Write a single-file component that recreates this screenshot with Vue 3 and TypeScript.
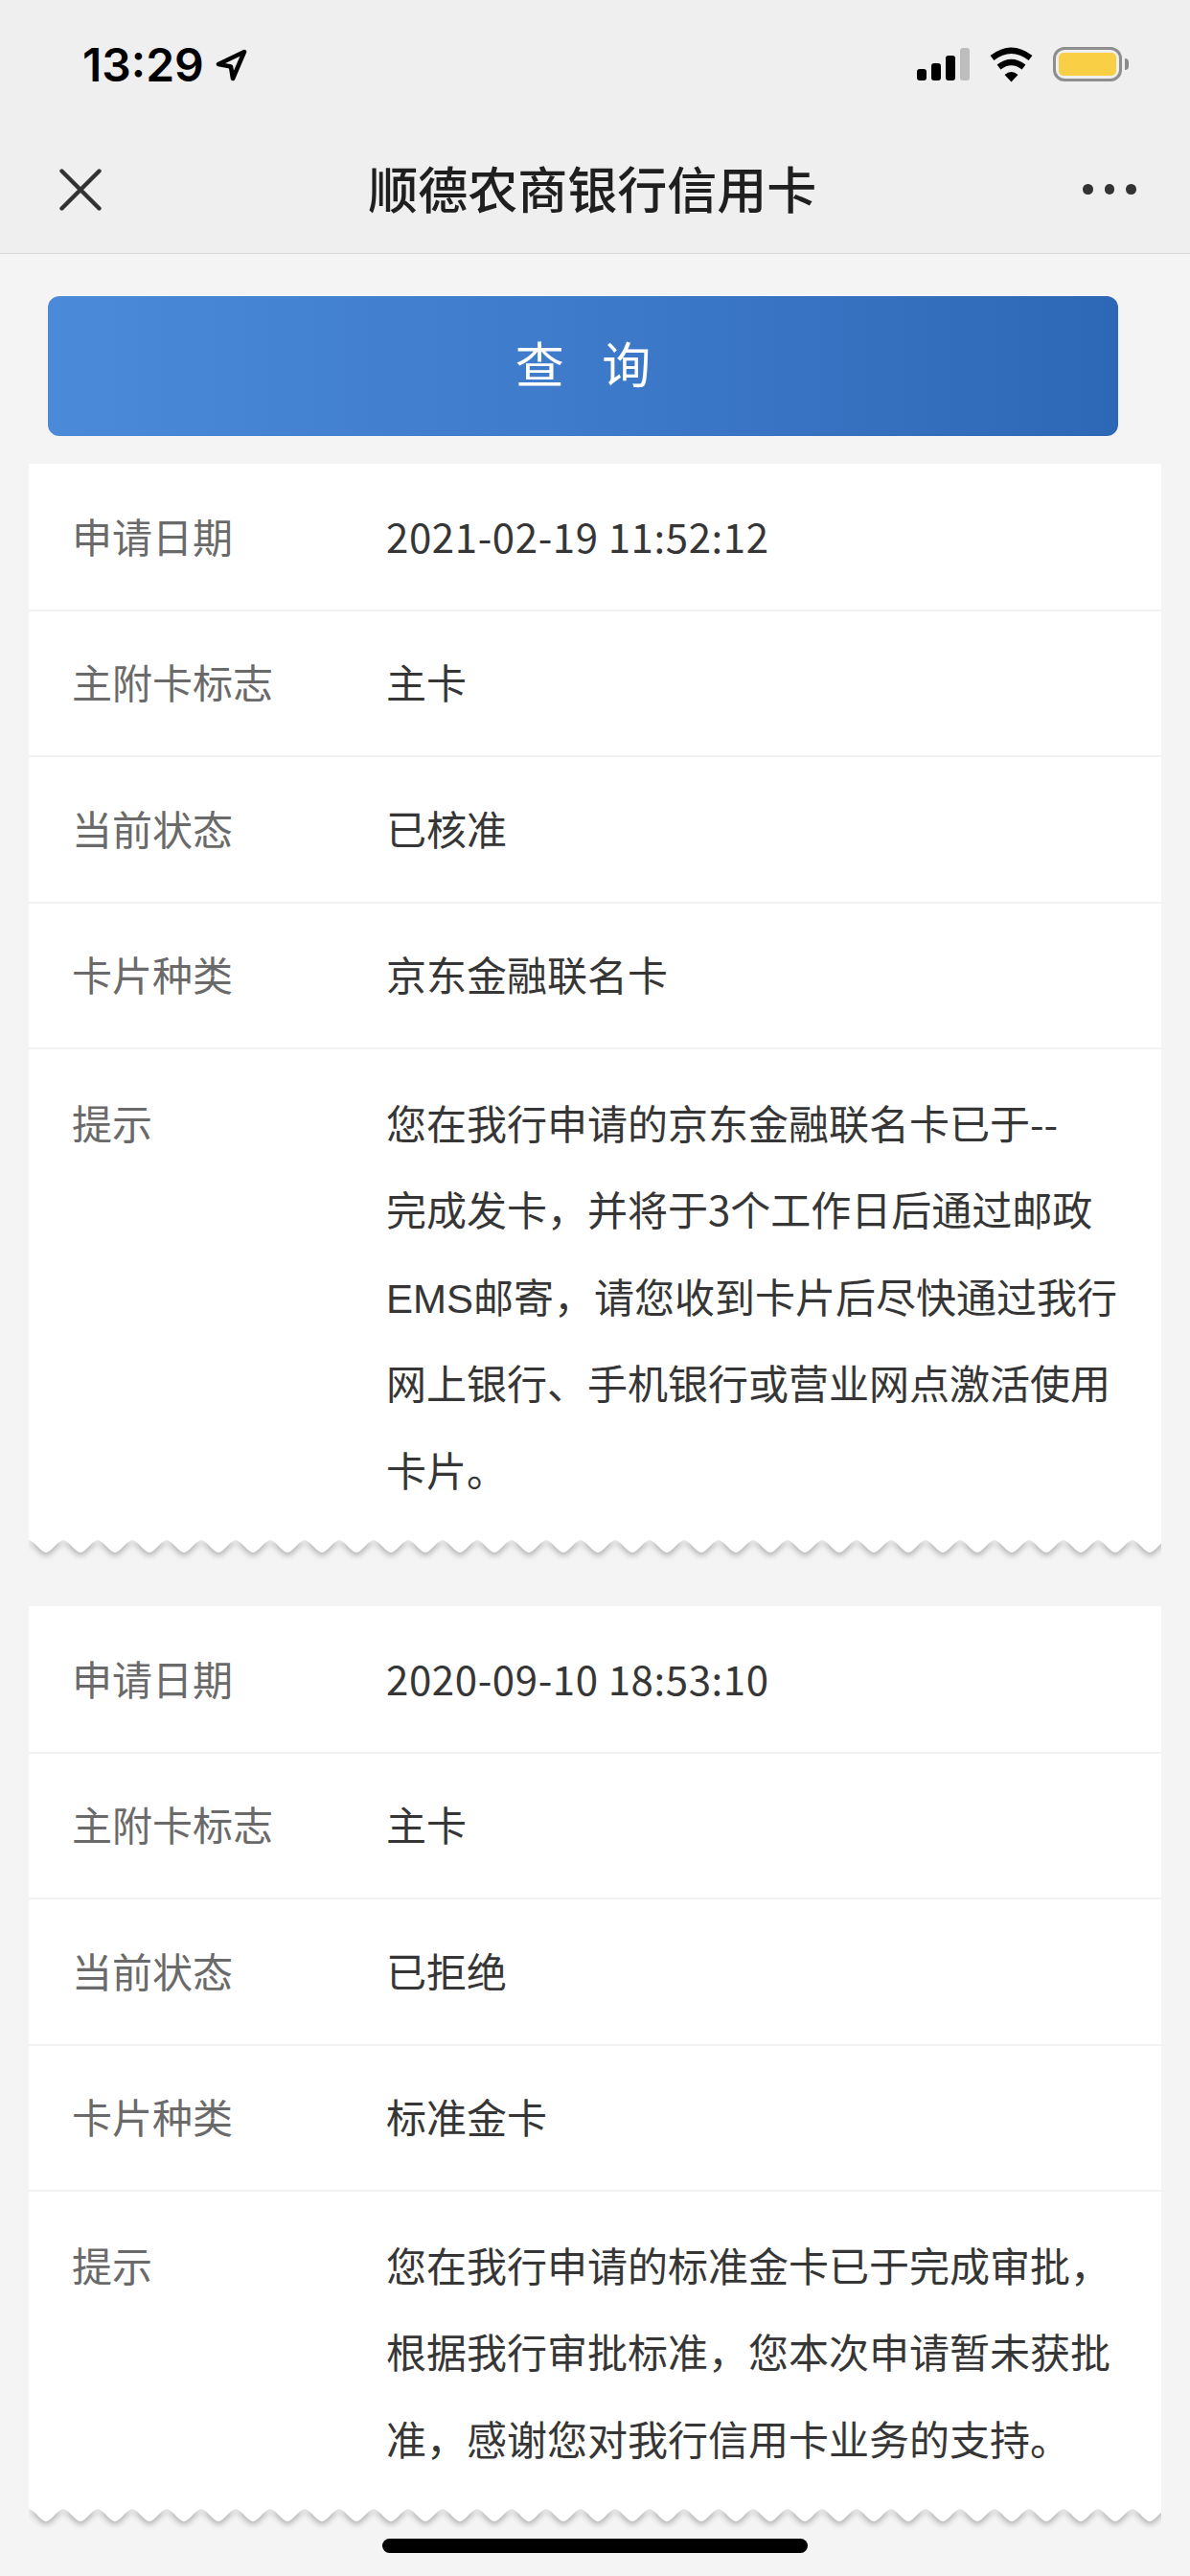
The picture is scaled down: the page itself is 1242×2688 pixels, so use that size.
<script setup lang="ts">
interface Row { label: string; lines: string[] }

const cards: Row[][] = [
  [
    { label: '申请日期', lines: ['2021-02-19 11:52:12'] },
    { label: '主附卡标志', lines: ['主卡'] },
    { label: '当前状态', lines: ['已核准'] },
    { label: '卡片种类', lines: ['京东金融联名卡'] },
    {
      label: '提示',
      lines: [
        '您在我行申请的京东金融联名卡已于--',
        '完成发卡，并将于3个工作日后通过邮政',
        'EMS邮寄，请您收到卡片后尽快通过我行',
        '网上银行、手机银行或营业网点激活使用',
        '卡片。',
      ],
    },
  ],
  [
    { label: '申请日期', lines: ['2020-09-10 18:53:10'] },
    { label: '主附卡标志', lines: ['主卡'] },
    { label: '当前状态', lines: ['已拒绝'] },
    { label: '卡片种类', lines: ['标准金卡'] },
    {
      label: '提示',
      lines: [
        '您在我行申请的标准金卡已于完成审批，',
        '根据我行审批标准，您本次申请暂未获批',
        '准，感谢您对我行信用卡业务的支持。',
      ],
    },
  ],
]

const WIDTH = 1182
const PERIOD = 36
const TOP = 1
const BOTTOM = 14

function buildWave(): string {
  let d = `M0 0 L0 ${TOP}`
  for (let x = 0; x < WIDTH; x += PERIOD) {
    const half = PERIOD / 2
    d += ` C${x + 5} ${TOP} ${x + half - 5} ${BOTTOM} ${x + half} ${BOTTOM}`
    d += ` C${x + half + 5} ${BOTTOM} ${x + PERIOD - 5} ${TOP} ${x + PERIOD} ${TOP}`
  }
  return `${d} L${WIDTH + PERIOD} 0 Z`
}

const wavePath = buildWave()

const isDate = (line: string): boolean => /^[\d\s:-]+$/.test(line)
const segments = (line: string): string[] => line.split(/([A-Z]+)/).filter(Boolean)
const isLatin = (part: string): boolean => /^[A-Z]+$/.test(part)
</script>

<template>
  <div class="page">
    <header class="header">
      <div class="status">
        <div class="clock">
          <span class="time">13:29</span>
          <svg class="arrow" width="34" height="34" viewBox="0 0 34 34">
            <path d="M30 3 L3 16 L16 18.5 L18 31 Z" fill="none" stroke="#000" stroke-width="4.6" stroke-linejoin="round" />
          </svg>
        </div>
        <div class="indicators">
          <div class="signal">
            <i class="bar b1"></i>
            <i class="bar b2"></i>
            <i class="bar b3"></i>
            <i class="bar b4"></i>
          </div>
          <svg class="wifi" width="48" height="37" viewBox="0 0 48 37">
            <path d="M3.5 11.5 Q23.5 -4 43.5 11.5" fill="none" stroke="#000" stroke-width="6.4" />
            <path d="M10.5 21 Q23.5 11 36.5 21" fill="none" stroke="#000" stroke-width="6.2" />
            <path d="M16.5 29 Q23.5 23 30.5 29 L23.5 36.5 Z" fill="#000" />
          </svg>
          <div class="battery">
            <div class="cell"><div class="charge"></div></div>
            <div class="nub"></div>
          </div>
        </div>
      </div>
      <nav class="nav">
        <svg class="close" width="44" height="44" viewBox="0 0 44 44">
          <path d="M2.5 2.5 L41.5 41.5 M41.5 2.5 L2.5 41.5" stroke="#333" stroke-width="4.4" stroke-linecap="round" />
        </svg>
        <h1 class="title">顺德农商银行信用卡</h1>
        <div class="more"><i></i><i></i><i></i></div>
      </nav>
    </header>

    <main class="content">
      <button class="query" type="button">查 询</button>
      <section v-for="(card, c) in cards" :key="c" class="card">
        <div class="rows">
          <div v-for="row in card" :key="row.label" class="row">
            <div class="label">{{ row.label }}</div>
            <div class="value">
              <div v-for="line in row.lines" :key="line" class="line" :class="{ date: isDate(line) }">
                <span v-for="part in segments(line)" :key="part" :class="{ latin: isLatin(part) }">{{ part }}</span>
              </div>
            </div>
          </div>
        </div>
        <svg class="wave" :width="WIDTH" height="24" :viewBox="`0 0 ${WIDTH} 24`">
          <path :d="wavePath" fill="#fff" />
        </svg>
      </section>
    </main>

    <div class="home"></div>
  </div>
</template>

<style scoped>
.page {
  position: relative;
  width: 1242px;
  height: 2688px;
  overflow: hidden;
  background: #f4f4f4;
  font-family: "Noto Sans CJK SC", "Liberation Sans", sans-serif;
}

.header {
  height: 265px;
  box-sizing: border-box;
  background: #efefef;
  border-bottom: 1px solid #d8d8d8;
}

.status {
  height: 135px;
  box-sizing: border-box;
  padding: 49px 64px 0 86px;
  display: flex;
  justify-content: space-between;
  align-items: flex-start;
}

.clock {
  display: flex;
  align-items: center;
  height: 37px;
  gap: 12px;
}

.time {
  font-family: Inter, "Liberation Sans", sans-serif;
  font-weight: 600;
  font-size: 48px;
  line-height: 37px;
  color: #000;
}

.arrow {
  margin-top: 1px;
}

.indicators {
  display: flex;
  align-items: flex-start;
}

.signal {
  display: flex;
  align-items: flex-end;
  gap: 5px;
  height: 35px;
  margin-right: 20px;
}

.bar {
  display: block;
  width: 10px;
  border-radius: 3px;
  background: #000;
}

.b1 { height: 12px; }
.b2 { height: 18px; }
.b3 { height: 26px; }
.b4 { height: 34px; background: #bdbdbd; }

.wifi {
  margin-right: 19px;
}

.battery {
  display: flex;
  align-items: center;
  height: 36px;
}

.cell {
  box-sizing: border-box;
  width: 72px;
  height: 36px;
  padding: 3px;
  border: 3px solid #8e8e8e;
  border-radius: 12px;
}

.charge {
  height: 100%;
  border-radius: 5px;
  background: #f8cf45;
}

.nub {
  width: 4px;
  height: 12px;
  margin-left: 3px;
  border-radius: 0 4px 4px 0;
  background: #8a8a8a;
}

.nav {
  height: 129px;
  box-sizing: border-box;
  padding: 0 56px 0 62px;
  display: flex;
  align-items: center;
  justify-content: space-between;
  margin-top: -2px;
}

.close {
  flex: none;
}

.title {
  margin: -4px 0 0;
  font-size: 52px;
  font-weight: 500;
  line-height: 60px;
  color: #1f1f1f;
}

.more {
  display: flex;
  gap: 12px;
}

.more i {
  display: block;
  width: 10.5px;
  height: 10.5px;
  border-radius: 50%;
  background: #333;
}

.content {
  padding: 44px 30px 0;
}

.query {
  display: block;
  width: 1117px;
  height: 146px;
  margin: 0 0 29px 20px;
  padding: 0 0 8px;
  border: 0;
  border-radius: 12px;
  background: linear-gradient(90deg, #4a8ad9 0%, #3f7ccb 45%, #2d68b6 100%);
  box-shadow: 0 0 2px #fff;
  color: #fff;
  font-family: inherit;
  font-size: 51px;
  font-weight: 400;
  word-spacing: 28px;
}

.card {
  margin-bottom: 46px;
}

.rows {
  padding-top: 1px;
  background: #fff;
}

.row {
  display: flex;
  padding: 28.5px 0 31.5px;
  border-bottom: 2px solid #f2f2f2;
  font-size: 42px;
}

.row:last-child {
  border-bottom: 0;
  padding: 30.5px 0 29px;
}

.label {
  flex: none;
  width: 328px;
  padding-left: 45px;
  line-height: 90px;
  color: #6a6a6a;
}

.value {
  color: #363636;
  white-space: nowrap;
}

.line {
  height: 90.5px;
  line-height: 90px;
}

.date {
  letter-spacing: 0.6px;
}

.latin {
  font-family: "Liberation Sans", sans-serif;
}

.wave {
  display: block;
  height: 24px;
  margin-top: -1px;
}

.wave path {
  filter: drop-shadow(0 3px 3px rgba(0, 0, 0, 0.3));
}

.home {
  position: absolute;
  left: 399px;
  top: 2649px;
  width: 444px;
  height: 15px;
  border-radius: 8px;
  background: #000;
}
</style>

<style>
html,
body {
  margin: 0;
  background: #f4f4f4;
}
</style>
